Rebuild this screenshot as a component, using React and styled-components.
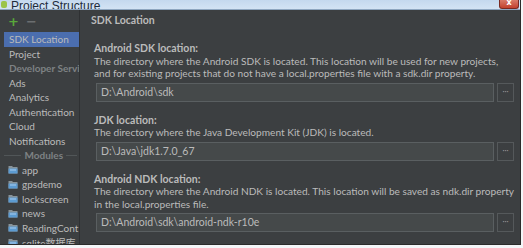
import React from 'react';
import styled, { createGlobalStyle } from 'styled-components';

const GlobalStyle = createGlobalStyle`
  html, body {
    margin: 0;
    padding: 0;
    background: #f4f6f8;
  }
  body {
    width: 523px;
    height: 248px;
    overflow: hidden;
    font-family: Lato, "Noto Sans", "Noto Sans CJK SC", sans-serif;
  }
`;

const Window = styled.div`
  width: 520px;
  height: 244px;
  display: flex;
  flex-direction: column;
  background: #3c3f41;
  border-right: 1px solid #2b2b2b;
  border-bottom: 1px solid #2b2b2b;
  overflow: hidden;
`;

const TitleBar = styled.div`
  height: 9px;
  flex-shrink: 0;
  display: flex;
  align-items: flex-end;
  background: linear-gradient(#c4d8ee, #d3e3f4);
  border-bottom: 1px solid #8ea6c0;
  overflow: hidden;
  position: relative;
`;

const TitleIcon = styled.div`
  width: 6px;
  height: 7px;
  margin-left: 1px;
  margin-bottom: 1px;
  border-radius: 2px;
  background: #9bc44a;
`;

const TitleText = styled.div`
  font-family: "Liberation Sans", sans-serif;
  font-size: 12px;
  line-height: 12px;
  margin-left: 4px;
  margin-bottom: -3px;
  color: #1e2c3c;
`;

const CloseButton = styled.div`
  position: absolute;
  right: 1px;
  top: 0;
  width: 18px;
  height: 8px;
  background: linear-gradient(#d97a68, #c2412d);
  border: 1px solid #7a2a22;
  border-top: none;
  border-radius: 0 0 3px 3px;
  color: #fff;
  font-family: "DejaVu Sans", sans-serif;
  font-size: 8px;
  line-height: 6px;
  text-align: center;
  font-weight: bold;
`;

const Body = styled.div`
  flex: 1;
  display: flex;
  min-height: 0;
`;

const Sidebar = styled.div`
  width: 79px;
  flex-shrink: 0;
  display: flex;
  flex-direction: column;
  border-right: 1px solid #2f3133;
  overflow: hidden;
`;

const Toolbar = styled.div`
  height: 22px;
  display: flex;
  align-items: center;
  gap: 7px;
  padding-left: 8px;
  flex-shrink: 0;
`;

const ToolIcon = styled.span`
  font-family: "DejaVu Sans", sans-serif;
  font-size: 13px;
  font-weight: bold;
  line-height: 1;
  color: ${p => p.$color};
`;

const List = styled.div`
  display: flex;
  flex-direction: column;
  padding-left: 4px;
`;

const Item = styled.div`
  height: 14.5px;
  flex-shrink: 0;
  display: flex;
  align-items: center;
  gap: 4px;
  padding-left: ${p => (p.$module ? 4 : 5)}px;
  font-size: 10px;
  white-space: nowrap;
  color: ${p => (p.$muted ? '#7e8284' : '#bbbbbb')};
  background: ${p => (p.$selected ? '#4b6eaf' : 'transparent')};
  font-weight: ${p => (p.$muted ? 700 : 400)};
`;

const GroupHeader = styled.div`
  height: 14.5px;
  flex-shrink: 0;
  display: flex;
  align-items: center;
  gap: 3px;
  padding-right: 2px;
  font-size: 10px;
  font-weight: 700;
  color: #7e8284;
  white-space: nowrap;

  &::before, &::after {
    content: '';
    flex: 1;
    height: 1px;
    background: #515658;
  }
  &::before {
    flex: 1.6;
  }
`;

const Folder = () => (
  <svg width="10" height="9" viewBox="0 0 10 9">
    <path d="M0.5 1h3.5l1 1h4.5v6.5h-9z" fill="#87939a" />
    <path d="M0.5 3.5h9v5h-9z" fill="#5c9bd1" />
    <rect x="2" y="4.5" width="6" height="1" fill="#a9cdef" />
  </svg>
);

const Main = styled.div`
  flex: 1;
  display: flex;
  flex-direction: column;
  padding: 3px 15px 0 11px;
  color: #bbbbbb;
  font-size: 10.15px;
`;

const PanelTitle = styled.div`
  font-weight: bold;
  font-size: 10.5px;
  height: 15px;
  line-height: 15px;
  margin-bottom: 14px;
`;

const Section = styled.div`
  display: flex;
  flex-direction: column;
  padding-left: 3px;
  margin-bottom: ${p => p.$gap}px;
`;

const Label = styled.div`
  font-weight: bold;
  font-size: 10.5px;
  line-height: 12.5px;
`;

const Description = styled.div`
  line-height: 12.5px;
  white-space: nowrap;
`;

const FieldRow = styled.div`
  display: flex;
  gap: 3px;
  margin-top: 3px;
  padding-left: 2px;
`;

const Input = styled.div`
  flex: 1;
  height: 17px;
  line-height: 17px;
  padding-left: 4px;
  background: #45494a;
  border: 1px solid #5a5f61;
  color: #bbbbbb;
  font-size: 10.5px;
`;

const Browse = styled.div`
  width: 15px;
  height: 17px;
  border: 1px solid #55595b;
  background: #3c3f41;
  color: #9a9a9a;
  font-size: 8px;
  line-height: 14px;
  text-align: center;
`;

const sidebarItems = [
  { label: 'Project' },
  { label: 'Developer Servi', muted: true },
  { label: 'Ads' },
  { label: 'Analytics' },
  { label: 'Authentication' },
  { label: 'Cloud' },
  { label: 'Notifications' },
];

const modules = ['app', 'gpsdemo', 'lockscreen', 'news', 'ReadingCont', 'sqlite数据库'];

const sections = [
  {
    label: 'Android SDK location:',
    lines: [
      'The directory where the Android SDK is located. This location will be used for new projects,',
      'and for existing projects that do not have a local.properties file with a sdk.dir property.',
    ],
    value: 'D:\\Android\\sdk',
    gap: 12,
  },
  {
    label: 'JDK location:',
    lines: ['The directory where the Java Development Kit (JDK) is located.'],
    value: 'D:\\Java\\jdk1.7.0_67',
    gap: 12,
  },
  {
    label: 'Android NDK location:',
    lines: [
      'The directory where the Android NDK is located. This location will be saved as ndk.dir property',
      'in the local.properties file.',
    ],
    value: 'D:\\Android\\sdk\\android-ndk-r10e',
    gap: 0,
  },
];

export default function App() {
  return (
    <>
      <GlobalStyle />
      <Window>
        <TitleBar>
          <TitleIcon />
          <TitleText>Project Structure</TitleText>
          <CloseButton>x</CloseButton>
        </TitleBar>
        <Body>
          <Sidebar>
            <Toolbar>
              <ToolIcon $color="#59a83b">+</ToolIcon>
              <ToolIcon $color="#6b6e70">−</ToolIcon>
            </Toolbar>
            <List>
              <Item $selected>SDK Location</Item>
              {sidebarItems.map(it => (
                <Item key={it.label} $muted={it.muted}>{it.label}</Item>
              ))}
              <GroupHeader>Modules</GroupHeader>
              {modules.map(m => (
                <Item key={m} $module>
                  <Folder />
                  {m}
                </Item>
              ))}
            </List>
          </Sidebar>
          <Main>
            <PanelTitle>SDK Location</PanelTitle>
            {sections.map(s => (
              <Section key={s.label} $gap={s.gap}>
                <Label>{s.label}</Label>
                {s.lines.map(l => (
                  <Description key={l}>{l}</Description>
                ))}
                <FieldRow>
                  <Input>{s.value}</Input>
                  <Browse>···</Browse>
                </FieldRow>
              </Section>
            ))}
          </Main>
        </Body>
      </Window>
    </>
  );
}
